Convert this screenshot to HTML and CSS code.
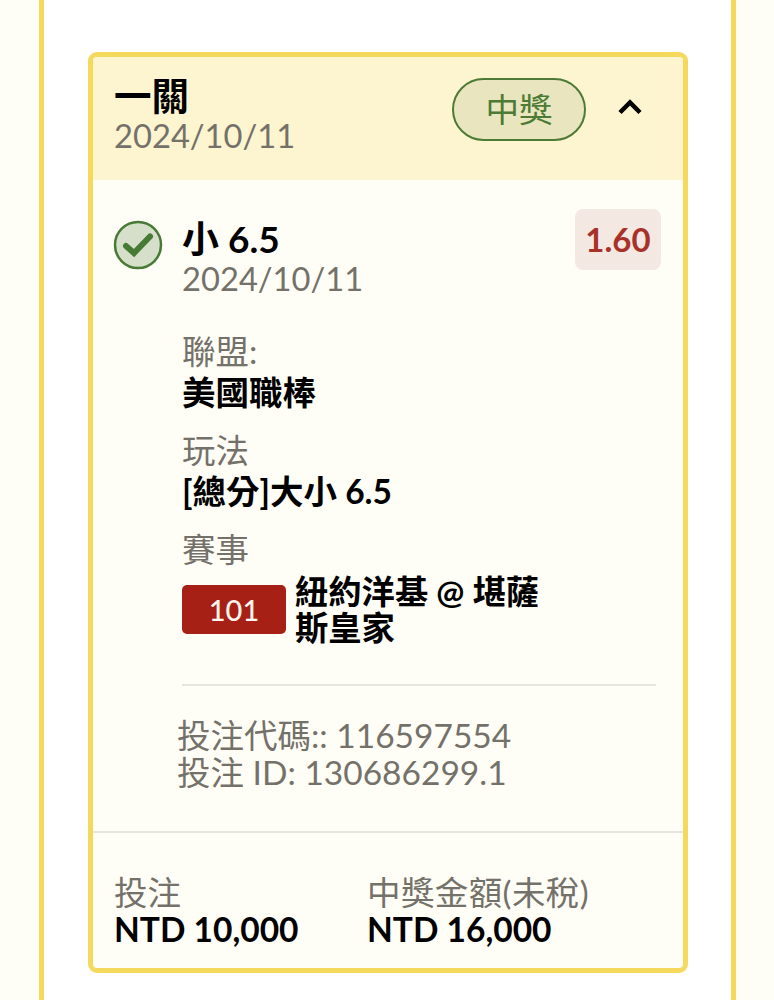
FILE: index.html
```html
<!DOCTYPE html>
<html lang="zh-Hant">
<head>
<meta charset="utf-8">
<title>投注</title>
<link rel="stylesheet" href="styles.css">
</head>
<body>
<main class="panel">
  <section class="card">
    <header class="card-head">
      <div class="head-title">
        <div class="title">一關</div>
        <div class="date">2024/10/11</div>
      </div>
      <div class="head-actions">
        <span class="pill">中獎</span>
        <svg class="chevron" width="24" height="18" viewBox="0 0 24 18" aria-hidden="true"><path d="M2 14.500 12 4.500l10 10" fill="none" stroke="#000" stroke-width="4.500"/></svg>
      </div>
    </header>
    <div class="card-body">
      <div class="pick">
        <svg class="check" width="50" height="50" viewBox="0 0 50 50" aria-hidden="true"><circle cx="25" cy="25" r="23" fill="#d6dfc9" stroke="#477a35" stroke-width="2.500"/><path d="M13 26 21 33 37 16.500" fill="none" stroke="#477a35" stroke-width="6" stroke-linecap="round"/></svg>
        <div class="pick-main">
          <div class="pick-top">
            <div>
              <div class="pick-name">小 6.5</div>
              <div class="date">2024/10/11</div>
            </div>
            <div class="odds">1.60</div>
          </div>
          <div class="field field-first">
            <div class="label">聯盟:</div>
            <div class="value">美國職棒</div>
          </div>
          <div class="field">
            <div class="label">玩法</div>
            <div class="value">[總分]大小 6.5</div>
          </div>
          <div class="field">
            <div class="label">賽事</div>
            <div class="match">
              <span class="match-no">101</span>
              <span class="match-name">紐約洋基 @ 堪薩斯皇家</span>
            </div>
          </div>
          <div class="rule"></div>
        </div>
      </div>
      <div class="codes">
        <div>投注代碼:: 116597554</div>
        <div>投注 ID: 130686299.1</div>
      </div>
    </div>
    <footer class="card-foot">
      <div class="stake">
        <div class="label">投注</div>
        <div class="foot-value">NTD 10,000</div>
      </div>
      <div>
        <div class="label foot-label">中獎金額(未稅)</div>
        <div class="foot-value">NTD 16,000</div>
      </div>
    </footer>
  </section>
</main>
</body>
</html>
```
FILE: styles.css
```css
* { box-sizing: border-box; }
html, body { margin: 0; height: 1000px; overflow: hidden; }
body {
  background: #fffef6;
  font-family: Lato, "Noto Sans CJK TC", sans-serif;
  color: #000;
}
.panel {
  width: 697px;
  height: 1000px;
  margin-left: 39px;
  padding: 52px 44px 0;
  background: #fff;
  border-left: 5px solid #f5d95c;
  border-right: 5px solid #f5d95c;
}
.card {
  width: 600px;
  height: 921px;
  border: 5px solid #f5d95c;
  border-radius: 9px;
  background: #fffef6;
  display: flex;
  flex-direction: column;
  overflow: hidden;
}
.card-head {
  height: 123px;
  flex: none;
  background: #fdf4d0;
  display: flex;
  justify-content: space-between;
  padding: 19px 41px 0 21px;
}
.title {
  font-size: 37.500px;
  line-height: 40px;
  font-weight: 700;
}
.date {
  font-size: 32.700px;
  line-height: 37px;
  color: #74716a;
}
.head-title .date { margin-top: 1px; }
.head-actions {
  display: flex;
  align-items: flex-start;
  gap: 32px;
  padding-top: 2px;
}
.pill {
  width: 134px;
  height: 63px;
  border: 2px solid #4d7a35;
  border-radius: 32px;
  background: #e9e6bf;
  color: #4d7a35;
  font-size: 33.500px;
  line-height: 59px;
  text-align: center;
}
.chevron { margin-top: 20px; }
.card-body {
  height: 653px;
  flex: none;
  padding: 29px 22px 0 21px;
  border-bottom: 2px solid #e6e6e0;
}
.pick { display: flex; gap: 19px; }
.check { flex: none; margin-top: 11px; margin-left: -1px; }
.pick-main { flex: 1; min-width: 0; }
.pick-top {
  display: flex;
  justify-content: space-between;
  align-items: flex-start;
}
.pick-name {
  font-size: 37px;
  line-height: 40px;
  font-weight: 700;
  margin-top: 10px;
}
.pick-top .date { margin-top: 1px; }
.odds {
  width: 86px;
  height: 61px;
  border-radius: 8px;
  background: #f3e8e2;
  color: #a8322a;
  font-size: 33px;
  line-height: 61px;
  font-weight: 700;
  text-align: center;
}
.label {
  font-size: 33.500px;
  line-height: 37px;
  color: #74716a;
}
.foot-label { letter-spacing: 0.400px; }
.value {
  font-size: 33.500px;
  line-height: 37px;
  font-weight: 700;
  margin-top: 4px;
}
.field { margin-top: 21px; }
.field-first { margin-top: 36px; }
.match {
  display: flex;
  align-items: flex-start;
  gap: 9px;
  margin-top: 5px;
}
.match-no {
  flex: none;
  width: 104px;
  height: 49px;
  margin-top: 12px;
  border-radius: 5px;
  background: #a72015;
  color: #fff6ee;
  font-size: 29px;
  font-weight: 500;
  line-height: 49px;
  text-align: center;
}
.match-name {
  width: 250px;
  font-size: 33.300px;
  line-height: 36px;
  font-weight: 700;
}
.rule {
  height: 2px;
  margin-top: 39px;
  background: #e6e6e0;
  width: 474px;
}
.codes {
  margin: 31px 0 0 63px;
  font-size: 33.500px;
  line-height: 37px;
  color: #74716a;
}
.card-foot {
  flex: 1;
  display: flex;
  padding: 41px 21px 0;
}
.foot-value {
  font-size: 33.500px;
  line-height: 37px;
  font-weight: 700;
}
.stake { width: 253px; }
```
